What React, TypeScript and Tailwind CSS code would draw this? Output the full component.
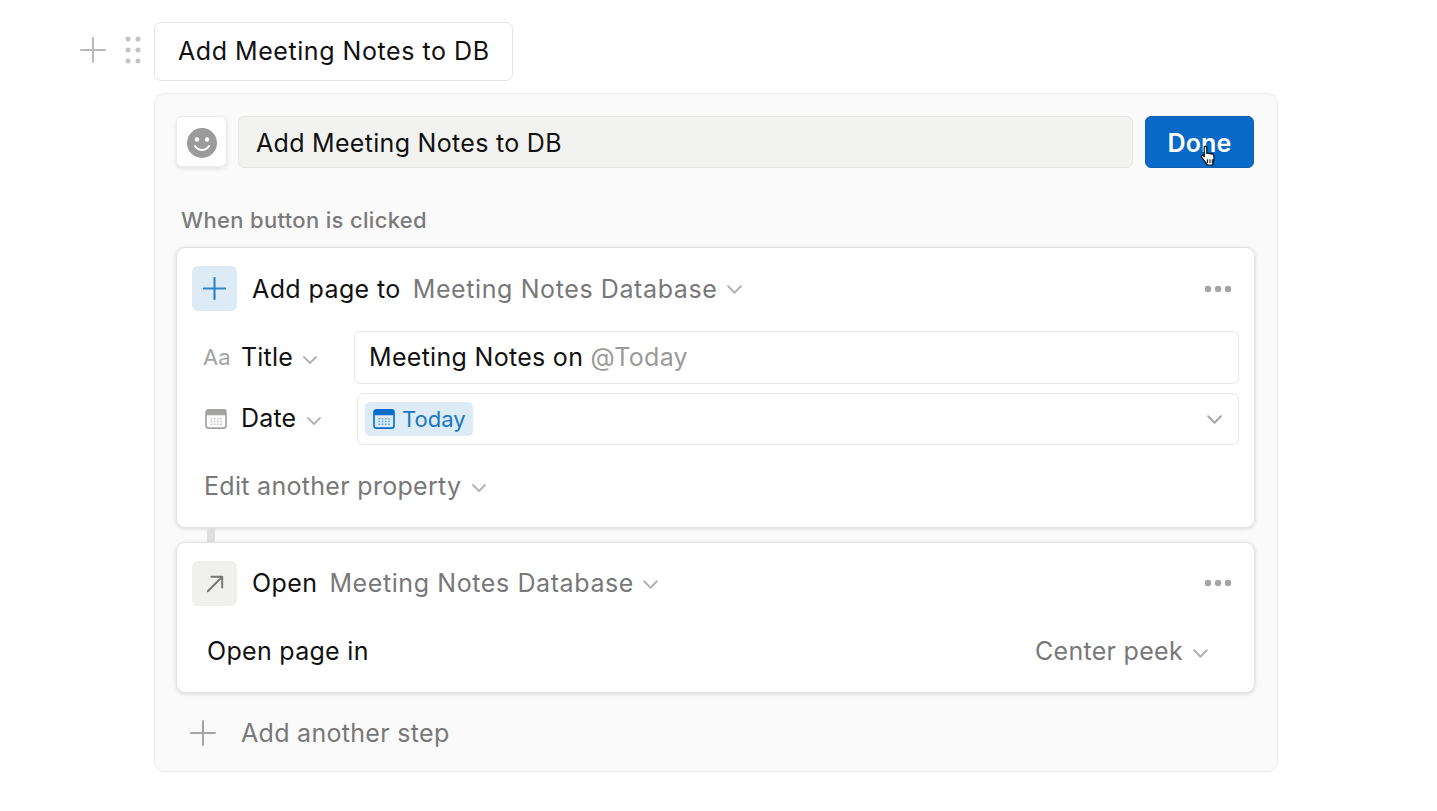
import React from "react";

const Chevron = ({ className = "" }: { className?: string }) => (
  <svg viewBox="0 0 16 10" className={className} fill="none" stroke="currentColor" strokeWidth="1.9" strokeLinecap="round" strokeLinejoin="round">
    <path d="M2 2l6 6 6-6" />
  </svg>
);

const Plus = ({ className = "", w = 2 }: { className?: string; w?: number }) => (
  <svg viewBox="0 0 26 26" className={className} fill="none" stroke="currentColor" strokeWidth={w} strokeLinecap="round">
    <path d="M13 1v24M1 13h24" />
  </svg>
);

const Dots3 = () => (
  <svg viewBox="0 0 28 8" className="w-[28px] h-[8px] text-[#a5a5a3]" fill="currentColor">
    <circle cx="4" cy="4" r="3.2" />
    <circle cx="14" cy="4" r="3.2" />
    <circle cx="24" cy="4" r="3.2" />
  </svg>
);

const Calendar = ({ color, head, bg, dots }: { color: string; head: string; bg: string; dots: string }) => (
  <svg viewBox="0 0 24 22" className="w-[22px] h-[20px]" fill="none">
    <rect x="1" y="1" width="22" height="20" rx="2.5" fill={bg} stroke={color} strokeWidth="1.8" />
    <path d="M1 3.5A2.5 2.5 0 0 1 3.5 1h17A2.5 2.5 0 0 1 23 3.5V7H1z" fill={head} />
    <g fill={dots}>
      {[6, 9.5, 13, 16.5].map((x) =>
        [10, 13, 16].map((y) => <rect key={x + "-" + y} x={x} y={y} width="1.8" height="1.6" />)
      )}
    </g>
  </svg>
);

const Smile = () => (
  <svg viewBox="0 0 30 30" className="w-[30px] h-[30px]">
    <circle cx="15" cy="15" r="15" fill="#9b9b9b" />
    <circle cx="10" cy="11.5" r="2.2" fill="#fff" />
    <circle cx="20" cy="11.5" r="2.2" fill="#fff" />
    <path d="M8 18c2 3 4.4 4 7 4s5-1 7-4" fill="none" stroke="#fff" strokeWidth="2" strokeLinecap="round" />
  </svg>
);

const Hand = () => (
  <svg viewBox="0 0 18 24" className="w-[17px] h-[23px]">
    <path
      d="M4.5 2.2c0-1.6 2.6-1.6 2.6 0v6.6c.8-.6 2-.5 2.5.2.8-.5 2-.3 2.4.5.9-.4 2.2 0 2.5 1 .6 2 .3 5-.4 7-.4 1.400-.6 2.500-.6 3.500H7.500c-.4-1.500-1.500-2.700-3-4.500C3.400 15 1.800 13.400 1.500 12.200c-.3-1.200 1-2 2-1.200l1 1z"
      fill="#fff"
      stroke="#111"
      strokeWidth="1.300"
      strokeLinejoin="round"
    />
    <path d="M8 15v4M10.500 15v4M13 15v4" stroke="#111" strokeWidth="1.100" />
  </svg>
);

export default function App() {
  return (
    <div className="w-[1437px] h-[811px] overflow-hidden bg-white pt-[22px] pl-[80px] antialiased text-[#111111] [font-family:Inter,'Noto_Sans',sans-serif]">
      <div className="flex items-center">
        <Plus className="w-[26px] h-[26px] mb-[4px] text-[#b9b9b7]" />
        <svg viewBox="0 0 16 28" className="w-[16px] h-[28px] mb-[4px] ml-[19px] mr-[13px] text-[#c4c4c2]" fill="currentColor">
          {[3, 14, 25].map((y) => (
            <g key={y}>
              <circle cx="3" cy={y} r="2.500" />
              <circle cx="13" cy={y} r="2.500" />
            </g>
          ))}
        </svg>
        <div className="w-[359px] h-[59px] flex items-center pl-[23px] bg-white rounded-[7px] border border-[#e4e4e2] text-[25px] tracking-[0.55px]">
          Add Meeting Notes to DB
        </div>
      </div>

      <div className="ml-[74px] mt-[12px] w-[1124px] h-[679px] rounded-[10px] border border-[#ececea] bg-[#fafafa] px-[21px] pt-[22px]">
        <div className="flex items-start">
          <div className="w-[51px] h-[51px] pt-[2px] flex items-center justify-center rounded-[6px] bg-white border border-[#ececea] shadow-[0_2px_4px_rgba(15,15,15,0.1)]">
            <Smile />
          </div>
          <div className="ml-[11px] w-[895px] h-[52px] flex items-center pl-[17px] pt-[4px] rounded-[6px] bg-[#f2f2f0] border border-[#e6e6e3] text-[25px] tracking-[0.3px]">
            Add Meeting Notes to DB
          </div>
          <div className="relative ml-[12px] w-[109px] h-[52px] flex items-center justify-center pt-[3px] rounded-[6px] bg-[#0969c6] border border-[#0a62b4] text-white text-[25px] font-semibold tracking-[0.2px]">
            Done
            <div className="absolute left-[54px] top-[28px]">
              <Hand />
            </div>
          </div>
        </div>

        <div className="mt-[37px] pl-[5px] text-[22px] leading-[30px] font-medium tracking-[0.33px] text-[#7b7b7b]">When button is clicked</div>

        <div className="mt-[12px] w-[1079px] h-[281px] rounded-[9px] bg-white border border-[#e3e3e1] shadow-[0_1px_4px_rgba(15,15,15,0.14)] px-[15px] pt-[18px]">
          <div className="flex items-center h-[45px]">
            <div className="w-[45px] h-[45px] flex items-center justify-center rounded-[6px] bg-[#dcebf6]">
              <Plus className="w-[23px] h-[23px] text-[#2f83c8]" w={2.4} />
            </div>
            <span className="ml-[15px] pt-[2px] text-[25px] tracking-[0.4px]">Add page to</span>
            <span className="ml-[12px] pt-[2px] text-[25px] text-[#787878] tracking-[0.6px]">Meeting Notes Database</span>
            <Chevron className="ml-[9px] mt-[2px] w-[17px] h-[11px] text-[#b3b3b1]" />
            <div className="ml-auto mr-[7px]">
              <Dots3 />
            </div>
          </div>

          <div className="flex items-center mt-[20px] h-[53px]">
            <div className="flex items-center w-[162px] shrink-0">
              <span className="ml-[11px] w-[28px] text-[22px] text-[#a3a3a1]">Aa</span>
              <span className="ml-[10px] text-[25px] tracking-[0.2px]">Title</span>
              <Chevron className="ml-[9px] mt-[4px] w-[16px] h-[10px] text-[#b3b3b1]" />
            </div>
            <div className="flex-1 h-[53px] flex items-center pl-[14px] rounded-[6px] border border-[#e8e8e6] text-[25px] tracking-[0.3px]">
              Meeting Notes on&nbsp;<span className="text-[#9a9a98]">@Today</span>
            </div>
          </div>

          <div className="flex items-center mt-[9px] h-[52px]">
            <div className="flex items-center w-[165px] shrink-0">
              <span className="ml-[13px] w-[26px] flex">
                <Calendar color="#a3a3a1" head="#a3a3a1" bg="#fff" dots="#c4c4c2" />
              </span>
              <span className="ml-[10px] text-[25px] tracking-[0.2px]">Date</span>
              <Chevron className="ml-[10px] mt-[4px] w-[16px] h-[10px] text-[#b3b3b1]" />
            </div>
            <div className="flex-1 h-[52px] flex items-center pl-[7px] pr-[15px] rounded-[6px] border border-[#e8e8e6]">
              <div className="h-[34px] w-[108px] flex items-center pl-[8px] rounded-[5px] bg-[#dcebf6] text-[#1b76c2] text-[22px]">
                <Calendar color="#0a6ecb" head="#0a6ecb" bg="#dcebf6" dots="#6aa6dc" />
                <span className="ml-[7px]">Today</span>
              </div>
              <Chevron className="ml-auto w-[17px] h-[11px] text-[#a8a8a6]" />
            </div>
          </div>

          <div className="flex items-center mt-[26px] ml-[12px] h-[30px]">
            <span className="pt-[2px] text-[25px] text-[#787878] tracking-[0.3px]">Edit another property</span>
            <Chevron className="ml-[10px] mt-[3px] w-[16px] h-[10px] text-[#b3b3b1]" />
          </div>
        </div>

        <div className="ml-[31px] w-[8px] h-[14px] bg-[#dfdfdd]" />

        <div className="w-[1079px] h-[151px] rounded-[9px] bg-white border border-[#e3e3e1] shadow-[0_1px_4px_rgba(15,15,15,0.14)] px-[15px] pt-[18px]">
          <div className="flex items-center h-[45px]">
            <div className="w-[45px] h-[45px] flex items-center justify-center rounded-[6px] bg-[#f0f0ee]">
              <svg viewBox="0 0 20 20" className="w-[18px] h-[18px] text-[#777775]" fill="none" stroke="currentColor" strokeWidth="2.2" strokeLinecap="round" strokeLinejoin="round">
                <path d="M2 18L18 2M6 2h12v12" />
              </svg>
            </div>
            <span className="ml-[15px] text-[25px] tracking-[0.4px]">Open</span>
            <span className="ml-[12px] text-[25px] text-[#787878] tracking-[0.6px]">Meeting Notes Database</span>
            <Chevron className="ml-[8px] mt-[2px] w-[17px] h-[11px] text-[#b3b3b1]" />
            <div className="ml-auto mr-[7px] mb-[2px]">
              <Dots3 />
            </div>
          </div>
          <div className="flex items-center mt-[30px] h-[32px] pl-[15px] pr-[30px]">
            <span className="text-[25px] tracking-[0.3px]">Open page in</span>
            <span className="ml-auto text-[25px] text-[#787878] tracking-[0.3px]">Center peek</span>
            <Chevron className="ml-[9px] mt-[3px] w-[17px] h-[11px] text-[#b3b3b1]" />
          </div>
        </div>

        <div className="flex items-center mt-[25px] h-[30px] pl-[14px]">
          <Plus className="w-[26px] h-[26px] text-[#a5a5a3]" />
          <span className="ml-[25px] pt-[2px] text-[25px] text-[#787878] tracking-[0.3px]">Add another step</span>
        </div>
      </div>
    </div>
  );
}
